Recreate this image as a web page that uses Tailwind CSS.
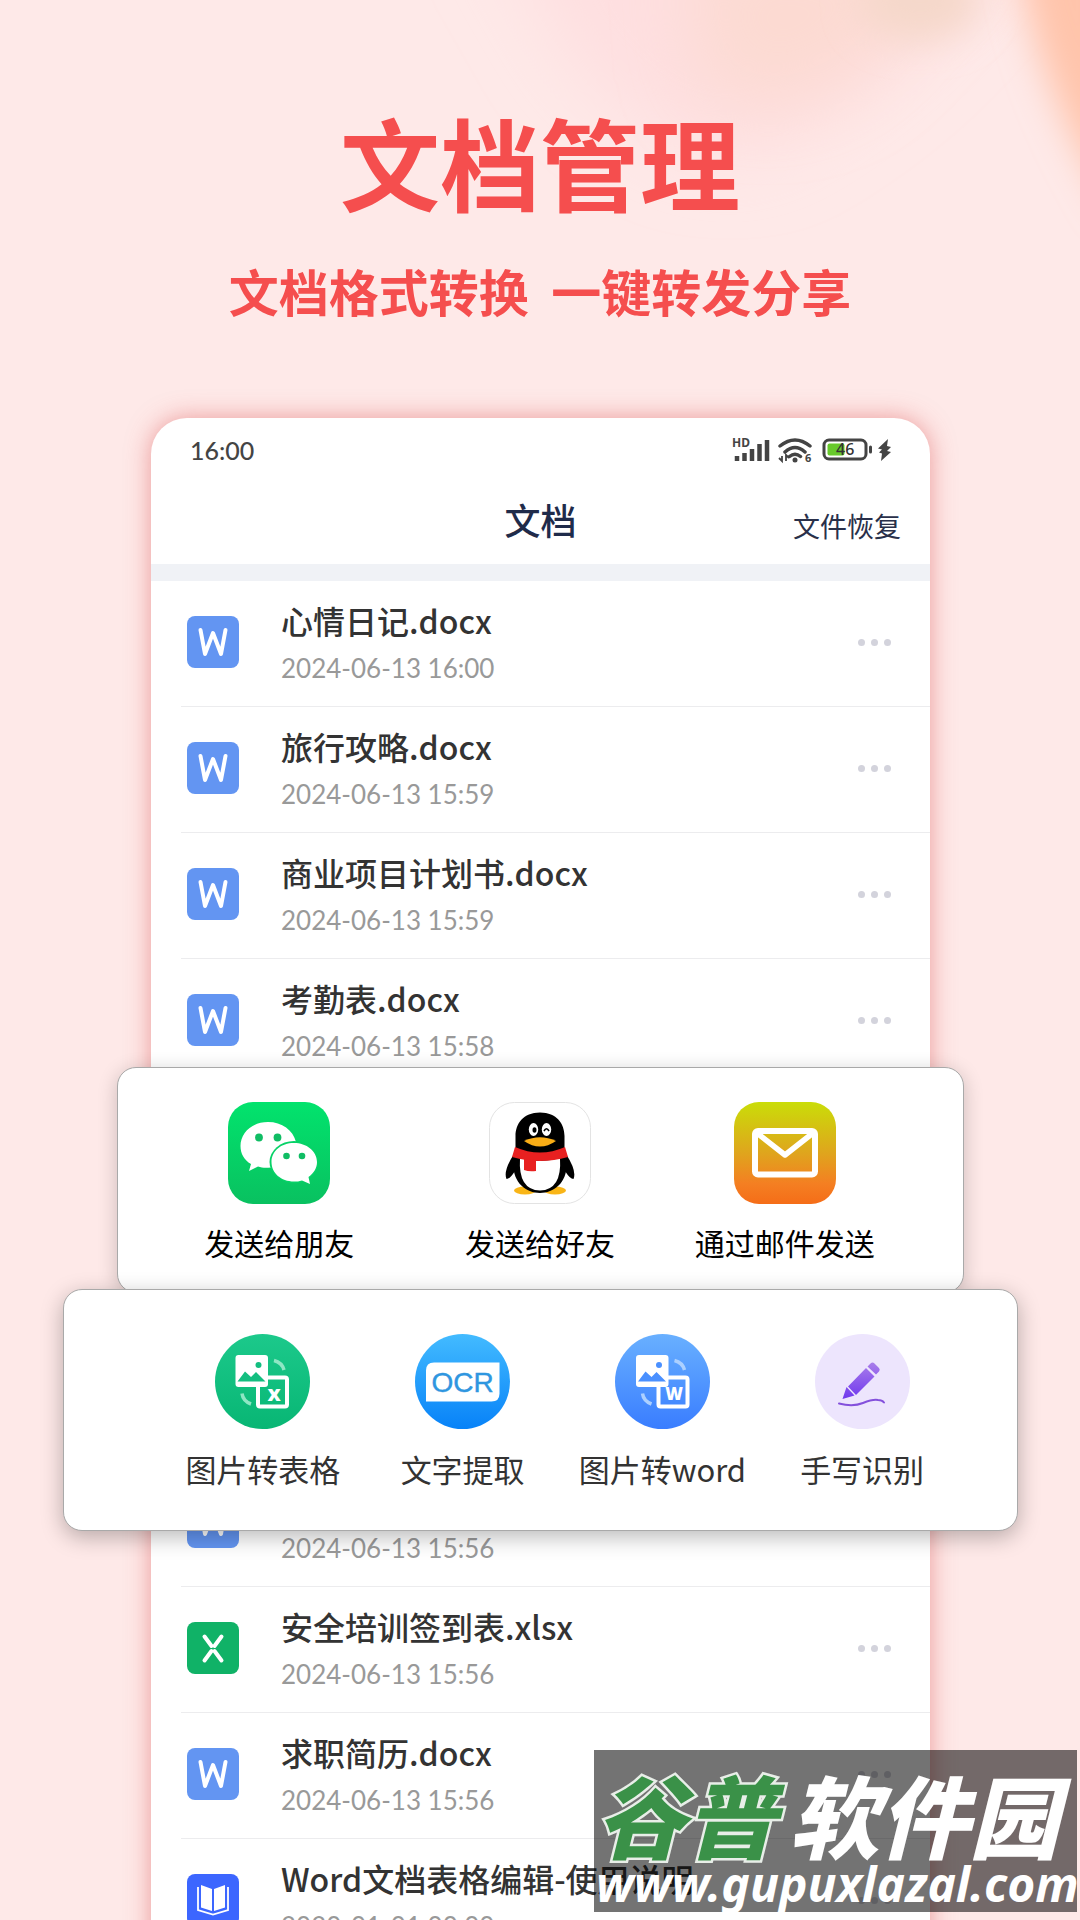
<!DOCTYPE html>
<html lang="zh">
  <head>
    <meta charset="UTF-8" />
    <meta name="viewport" content="width=device-width, initial-scale=1.0" />
    <title>文档管理</title>
    <script src="https://cdn.jsdelivr.net/npm/@tailwindcss/browser@4"></script>
  </head>
  <body class="relative h-screen overflow-hidden bg-[#fee9e8] font-['Noto_Sans_CJK_SC',sans-serif] text-[#333]">
    <!-- 背景光斑 -->
    <svg class="absolute top-0 right-0 -z-0 w-[720px] h-[420px]" viewBox="0 0 720 420" aria-hidden="true">
      <defs>
        <filter id="soft" x="-50%" y="-50%" width="200%" height="200%"><feGaussianBlur stdDeviation="36" /></filter>
        <filter id="edge" x="-50%" y="-50%" width="200%" height="200%"><feGaussianBlur stdDeviation="18" /></filter>
      </defs>
      <path d="M130 -80L210 60Q310 180 410 150Q560 70 660 -80Z" fill="#fedfe0" filter="url(#soft)" />
      <path d="M330 -60L340 80Q400 130 500 70L620 -60Z" fill="#fcdad2" filter="url(#soft)" />
      <ellipse cx="560" cy="0" rx="60" ry="40" fill="#f5d8ca" filter="url(#edge)" />
      <path d="M655 -80Q660 60 760 220V-80Z" fill="#ffc4ab" filter="url(#edge)" />
    </svg>

    <!-- 标题 -->
    <header class="relative pt-[88px] text-center font-bold text-[#f54e4e]">
      <h1 class="text-[100px] leading-[146px]">文档管理</h1>
      <p class="mt-[20px] text-[50px] leading-[72px] whitespace-pre">文档格式转换  一键转发分享</p>
    </header>

    <!-- 手机界面 -->
    <main class="relative mt-[92px] ml-[151px] mr-[150px] rounded-t-[36px] bg-white shadow-[0_0_24px_rgba(220,75,75,0.5)]">
      <!-- 状态栏 -->
      <div class="flex items-center justify-between pt-[16px] pl-[39px] pr-[38px] h-[48px]">
        <span class="font-['Lato',sans-serif] text-[25px] leading-[30px] font-medium text-[#444]">16:00</span>
        <svg class="w-[160px] h-[28px]" viewBox="0 0 160 28" fill="none" aria-hidden="true">
          <text x="0" y="11" font-family="Noto Sans" font-size="12" font-weight="700" fill="#444">HD</text>
          <path d="M5 25v-5M12.500 25v-8M20 25v-12M27.500 25v-17M35 25v-21" stroke="#444" stroke-width="4.500" />
          <path d="M48 10Q63 -2 78 10M53 16Q63 7 73 16M57.500 20.500Q63 16 68.500 20.500" stroke="#444" stroke-width="3.500" stroke-linecap="round" />
          <circle cx="63" cy="24" r="2.500" fill="#444" />
          <path d="M50 20v5l-3-3M54 25v-6l3 3" stroke="#444" stroke-width="1.800" />
          <text x="73" y="26" font-family="Noto Sans" font-size="11" font-weight="700" fill="#444">6</text>
          <rect x="92" y="4" width="42" height="19" rx="5" stroke="#444" stroke-width="3" />
          <rect x="95.500" y="7.500" width="17" height="12" rx="2" fill="#67c92b" />
          <path d="M138.500 11v5" stroke="#444" stroke-width="3" stroke-linecap="round" />
          <text x="104" y="19" font-family="Noto Sans" font-size="16" font-weight="500" fill="#333">46</text>
          <path d="M156 3L146 12.500l4 1-3 3 3 1L149 25L159 16l-4-1 4-4-4-1Z" fill="#444" />
        </svg>
      </div>

      <!-- 顶栏 -->
      <div class="grid h-[98px] grid-cols-[1fr_auto_1fr] items-end pr-[29px] pb-[18px]">
        <h2 class="col-start-2 pl-[29px] text-[36px] leading-[54px] font-medium text-[#1f2b4a]">文档</h2>
        <button class="justify-self-end text-[27px] leading-[40px] text-[#29304a]">文件恢复</button>
      </div>
      <div class="h-[17px] bg-[#f0f2f6]"></div>

      <!-- 文件列表 -->
      <ul id="files-top"></ul>

      <!-- 分享面板 -->
      <section class="relative z-10 -mt-[18px] -mx-[34px] h-[226px] rounded-[19px] border border-[#a9a9a9] bg-white pt-[34px] pl-[27px] pr-[60px] text-black shadow-[0_4px_20px_rgba(0,0,0,0.2)]">
        <div class="grid grid-cols-[269fr_253fr_237fr] text-[30px] leading-[40px]">
          <button class="flex flex-col items-center gap-[18px]">
            <svg class="size-[102px]" viewBox="0 0 102 102" aria-hidden="true">
              <defs><linearGradient id="wx" x2="0" y2="1"><stop stop-color="#02e36d" /><stop offset="1" stop-color="#09c160" /></linearGradient></defs>
              <rect width="102" height="102" rx="25" fill="url(#wx)" />
              <path d="M40 20C24 20 12.500 31 12.500 44C12.500 51.500 16 58 23 62L21 69L30 64.500C34 66 38 66 43 65.500L68 40C65 28 54 20 40 20Z" fill="#fff" />
              <ellipse cx="66" cy="60" rx="24.500" ry="21" fill="#07d267" />
              <path d="M66 41C78.500 41 89 49 89 60C89 66 86 71 80.500 75L82 82L74 78.500C71 79.500 69 79.500 66 79.500C53 79.500 43.500 71 43.500 60C43.500 49 53 41 66 41Z" fill="#fff" />
              <circle cx="31" cy="35.500" r="3.900" fill="#10bd64" /><circle cx="49.500" cy="35.500" r="3.900" fill="#10bd64" />
              <circle cx="58.500" cy="54" r="3.300" fill="#10bd64" /><circle cx="74" cy="54" r="3.300" fill="#10bd64" />
            </svg>
            发送给朋友
          </button>
          <button class="flex flex-col items-center gap-[18px]">
            <svg class="size-[102px]" viewBox="0 0 102 102" aria-hidden="true">
              <rect x=".5" y=".5" width="101" height="101" rx="25" fill="#fff" stroke="#e3e3e3" />
              <ellipse cx="36" cy="88.500" rx="11" ry="4" fill="#f9b517" /><ellipse cx="66" cy="88.500" rx="11" ry="4" fill="#f9b517" />
              <path d="M25 52Q14 69 17.500 77Q21 77 26 69ZM77 52Q88 69 84.500 77Q81 77 76 69Z" fill="#000" />
              <path d="M51 10.500C34 10.500 26.500 22 26.500 34V46C18 76 34 91 51 91S84 76 75.500 46V34C75.500 22 68 10.500 51 10.500Z" fill="#000" />
              <path d="M31 56Q29 88 51 88.500Q73 88 71 56Q51 62 31 56Z" fill="#fff" />
              <path d="M26 45Q51 56 76 45L79 55Q51 63 23 55Z" fill="#e82020" />
              <path d="M35 57V68Q40 70 47 69V58Z" fill="#e82020" />
              <ellipse cx="44.500" cy="27.500" rx="4.700" ry="6.500" fill="#fff" /><ellipse cx="57.500" cy="27.500" rx="4.700" ry="6.500" fill="#fff" />
              <ellipse cx="45.500" cy="28" rx="2" ry="2.800" fill="#000" />
              <path d="M55 29Q57.500 24.500 60 29" stroke="#000" stroke-width="1.600" fill="none" />
              <path d="M35 39Q51 31.500 67 39Q51 50 35 39Z" fill="#f9ad16" />
            </svg>
            发送给好友
          </button>
          <button class="flex flex-col items-center gap-[18px]">
            <svg class="size-[102px]" viewBox="0 0 102 102" aria-hidden="true">
              <defs><linearGradient id="mail" x2="0" y2="1"><stop stop-color="#cadd08" /><stop offset=".5" stop-color="#dfa51d" /><stop offset=".8" stop-color="#f47f22" /><stop offset="1" stop-color="#f56d18" /></linearGradient></defs>
              <rect width="102" height="102" rx="25" fill="url(#mail)" />
              <rect x="21" y="29" width="60" height="43.500" rx="3" fill="none" stroke="#fff" stroke-width="6" />
              <path d="M23 31L51 53L79 31" fill="none" stroke="#fff" stroke-width="5.500" stroke-linejoin="round" />
            </svg>
            通过邮件发送
          </button>
        </div>
      </section>

      <!-- 工具面板 -->
      <section class="relative z-20 -mt-[4px] -mx-[88px] h-[242px] rounded-[19px] border border-[#a9a9a9] bg-white pt-[44px] pl-[99px] pr-[55px] shadow-[0_6px_22px_rgba(0,0,0,0.28)]">
        <div class="grid grid-cols-4 text-[31px] leading-[40px] whitespace-nowrap">
          <button class="flex flex-col items-center gap-[20px]">
            <svg class="size-[95px]" viewBox="0 0 95 95" fill="none" aria-hidden="true">
              <defs><linearGradient id="xls" x2="0" y2="1"><stop stop-color="#1cc98b" /><stop offset="1" stop-color="#08b674" /></linearGradient></defs>
              <circle cx="47.500" cy="47.500" r="47.500" fill="url(#xls)" />
              <rect x="43" y="43.500" width="29" height="29" rx="2" stroke="#fff" stroke-width="4" />
              <rect x="20.500" y="21" width="32.500" height="32" rx="3" fill="#fff" />
              <path d="M22.500 47.500L30 37.500L36 43L41 38L50.500 47.500Z" fill="#13be80" /><circle cx="43.500" cy="31" r="3" fill="#13be80" />
              <path d="M59 26.500Q67 28.500 69 36M27 59.500Q28 67 36 70" stroke="#8ee6c4" stroke-width="3.500" />
              <text x="59" y="67" text-anchor="middle" font-family="Noto Sans" font-size="22" font-weight="800" fill="#fff">x</text>
            </svg>
            图片转表格
          </button>
          <button class="flex flex-col items-center gap-[20px]">
            <svg class="size-[95px]" viewBox="0 0 95 95" fill="none" aria-hidden="true">
              <defs><linearGradient id="ocr" x2="0" y2="1"><stop stop-color="#43bbff" /><stop offset="1" stop-color="#0782f8" /></linearGradient></defs>
              <circle cx="47.500" cy="47.500" r="47.500" fill="url(#ocr)" />
              <path d="M19 28.500H84.500V59.500Q84.500 67.500 76.500 67.500H11V36.500Q11 28.500 19 28.500Z" fill="#fff" />
              <text x="47.500" y="58" text-anchor="middle" font-family="Liberation Sans" font-size="28" fill="#2f96e0" stroke="#2f96e0" stroke-width=".4">OCR</text>
            </svg>
            文字提取
          </button>
          <button class="flex flex-col items-center gap-[20px]">
            <svg class="size-[95px]" viewBox="0 0 95 95" fill="none" aria-hidden="true">
              <defs><linearGradient id="doc" x2="0" y2="1"><stop stop-color="#69b0ff" /><stop offset="1" stop-color="#397dff" /></linearGradient></defs>
              <circle cx="47.500" cy="47.500" r="47.500" fill="url(#doc)" />
              <rect x="43.500" y="43.500" width="29" height="29" rx="2" stroke="#fff" stroke-width="4" />
              <rect x="21" y="21" width="32.500" height="32" rx="3" fill="#fff" />
              <path d="M23 47.500L30.500 37.500L36.500 43L41.500 38L51 47.500Z" fill="#4a90ff" /><circle cx="44" cy="31" r="3" fill="#4a90ff" />
              <path d="M59.500 26.500Q67.500 28.500 69.500 36M27.500 59.500Q28.500 67 36.500 70" stroke="#acd0ff" stroke-width="3.500" />
              <text x="59" y="66" text-anchor="middle" font-family="Noto Sans" font-size="17" font-weight="900" fill="#fff">W</text>
            </svg>
            图片转word
          </button>
          <button class="flex flex-col items-center gap-[20px]">
            <svg class="size-[95px]" viewBox="0 0 95 95" fill="none" aria-hidden="true">
              <defs><linearGradient id="pen" x2="0" y2="1"><stop stop-color="#a97eea" /><stop offset="1" stop-color="#7038ee" /></linearGradient></defs>
              <circle cx="47.500" cy="47.500" r="47.500" fill="#ede5fd" />
              <path d="M55.500 29.500Q57.500 27.500 59.500 29.500L64 34Q65.500 35.500 64 37.500L61 40.500L52.500 32.500ZM51 34L59.500 42.500L41 61L33 52.500ZM31.500 53L39.500 61.500L27.500 65Z" fill="url(#pen)" />
              <path d="M24 69.500Q38 73 48 69T63 66Q67 66 69 68.500" stroke="#8450dc" stroke-width="2" stroke-linecap="round" />
            </svg>
            手写识别
          </button>
        </div>
      </section>

      <ul id="files-bottom" class="-mt-[70px]"></ul>
    </main>

    <!-- 水印 -->
    <div class="absolute right-[3px] bottom-[8px] z-30 h-[162px] w-[483px] bg-black/55 whitespace-nowrap text-white italic">
      <div class="flex h-[110px] items-center pt-[16px] pl-[2px] text-[90px] leading-[100px] font-black">
        <span class="text-[#3a9148] [-webkit-text-stroke:5px_#e8eee8] [paint-order:stroke_fill]">谷普</span>
        <span class="pl-[13px]">软件园</span>
      </div>
      <div class="pl-[2px] font-['Noto_Sans',sans-serif] text-[48px] leading-[48px] font-bold">www.gupuxlazal.com</div>
    </div>

    <!-- 文件行模板 -->
    <template id="file-row">
      <li class="flex h-[126px] pl-[36px]">
        <span data-icon class="mt-[35px] h-[52px] w-[52px] shrink-0"></span>
        <div class="ml-[42px] grow pt-[16px]">
          <h3 data-name class="h-[48px] text-[32px] leading-[46px] font-medium whitespace-nowrap"></h3>
          <time data-time class="block font-['Lato',sans-serif] text-[26px] leading-[46px] text-[#999]"></time>
        </div>
        <button aria-label="更多" class="mr-[39px] flex items-center gap-[6px] pb-[3px]">
          <i class="size-[7px] rounded-full bg-[#d3d3dc]"></i>
          <i class="size-[7px] rounded-full bg-[#d3d3dc]"></i>
          <i class="size-[7px] rounded-full bg-[#d3d3dc]"></i>
        </button>
      </li>
      <li class="ml-[30px] -mt-px h-px bg-[#ececee]"></li>
    </template>

    <script>
      const icons = {
        word: '<svg viewBox="0 0 52 52" fill="none"><rect width="52" height="52" rx="8" fill="#6395f2"/><path d="M13.500 14L18 38L26 17L34 38L38.500 14" stroke="#fff" stroke-width="4" stroke-linecap="round" stroke-linejoin="round"/></svg>',
        excel: '<svg viewBox="0 0 52 52" fill="none"><rect width="52" height="52" rx="8" fill="#10b267"/><path d="M17.500 14.500L24.500 24M34.500 14.500L27.500 24M24.500 29L17.500 38.500M27.500 29L34.500 38.500" stroke="#fff" stroke-width="4" stroke-linecap="round"/></svg>',
        book: '<svg viewBox="0 0 52 52" fill="none"><rect width="52" height="52" rx="8" fill="#3c66ff"/><path d="M14 11L25 15V37L14 33.500ZM38 11L27 15V37L38 33.500Z" fill="#fff"/><path d="M11 13V36L26 40.500L41 36V13" stroke="#fff" stroke-width="1.800"/></svg>'
      };
      const top4 = [
        ['word', '心情日记.docx', '2024-06-13 16:00'],
        ['word', '旅行攻略.docx', '2024-06-13 15:59'],
        ['word', '商业项目计划书.docx', '2024-06-13 15:59'],
        ['word', '考勤表.docx', '2024-06-13 15:58']
      ];
      const rest = [
        ['word', '', '2024-06-13 15:56'],
        ['excel', '安全培训签到表.xlsx', '2024-06-13 15:56'],
        ['word', '求职简历.docx', '2024-06-13 15:56'],
        ['book', 'Word文档表格编辑-使用说明', '2020-01-01 00:00']
      ];

      function render(id, files) {
        const list = document.getElementById(id);
        const tpl = document.getElementById('file-row');
        for (const [icon, name, time] of files) {
          const row = tpl.content.cloneNode(true);
          row.querySelector('[data-icon]').innerHTML = icons[icon];
          row.querySelector('[data-name]').textContent = name;
          row.querySelector('[data-time]').textContent = time;
          list.appendChild(row);
        }
      }
      render('files-top', top4);
      render('files-bottom', rest);
    </script>
  </body>
</html>
